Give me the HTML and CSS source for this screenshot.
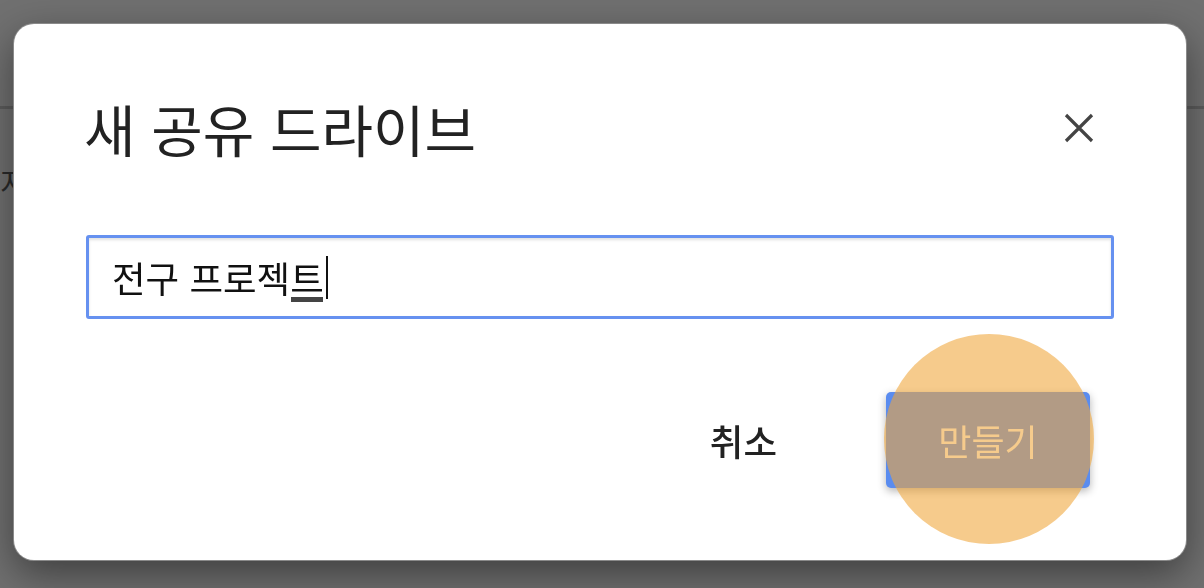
FILE: index.html
```html
<!DOCTYPE html>
<html lang="ko">
<head>
    <meta charset="UTF-8">
    <meta name="viewport" content="width=device-width, initial-scale=1.0">
    <title>새 공유 드라이브</title>
    <link rel="stylesheet" href="styles.css">
</head>

<body>
    <!-- page behind the modal -->
    <div class="page">
        <div class="page-header"></div>
        <div class="page-row"><span class="page-label">지</span></div>
    </div>

    <div class="backdrop">
        <div class="dialog">
            <div class="dialog-header">
                <h1>새 공유 드라이브</h1>
                <button class="close-button" aria-label="닫기">
                    <svg width="30" height="30" viewBox="0 0 30 30">
                        <path d="M2 2 L28 28 M28 2 L2 28" stroke="#444" stroke-width="3.2" fill="none"/>
                    </svg>
                </button>
            </div>

            <div class="name-field">
                <span class="typed">전구 프로젝</span><span class="composing">트</span><span class="caret"></span>
            </div>

            <div class="actions">
                <button class="cancel-button">취소</button>
                <div class="create-wrap">
                    <button class="create-button">만들기</button>
                    <!-- tap highlight -->
                    <span class="tap"></span>
                </div>
            </div>
        </div>
    </div>
</body>
</html>
```

FILE: styles.css
```css
body {
    margin: 0;
    height: 588px;
    overflow: hidden;
    background-color: #707070;
    font-family: "Noto Sans CJK KR", "Noto Sans", sans-serif;
    color: #222;
}

.page {
    height: 100%;
}

.page-header {
    height: 106px;
    border-bottom: 3px solid #5c5c5c;
}

.page-row {
    padding-top: 50px;
}

.page-label {
    display: inline-block;
    margin-left: 0;
    font-size: 30px;
    color: #2a2a2a;
}

/* Modal */
.backdrop {
    position: fixed;
    inset: 0;
}

.dialog {
    position: absolute;
    left: 14px;
    top: 24px;
    width: 1172px;
    height: 536px;
    box-sizing: border-box;
    padding: 72px 72px 72px 72px;
    background-color: #fff;
    border-radius: 20px;
    box-shadow: 0 0 0 1px #8a8a8a, 0 14px 40px rgba(0, 0, 0, 0.45);
    display: flex;
    flex-direction: column;
}

.dialog-header {
    height: 64px;
    display: flex;
    align-items: center;
    justify-content: space-between;
}

h1 {
    margin: 0 0 0 -2px;
    font-size: 56px;
    font-weight: 400;
    line-height: 64px;
    color: #222;
}

.close-button {
    border: none;
    background: none;
    padding: 0;
    margin-right: 20px;
    width: 30px;
    height: 30px;
    cursor: pointer;
}

.name-field {
    margin-top: 75px;
    height: 84px;
    box-sizing: border-box;
    border: 3px solid #6691f0;
    border-radius: 3px;
    box-shadow: inset 0 2px 3px rgba(0, 0, 0, 0.12);
    padding: 0 23px;
    display: flex;
    align-items: center;
    font-size: 36.5px;
    color: #111;
}

.composing {
    position: relative;
}

.composing::after {
    content: "";
    position: absolute;
    left: 1px;
    right: 1px;
    bottom: 2px;
    height: 5px;
    background-color: #444;
}

.caret {
    display: inline-block;
    width: 2px;
    height: 43px;
    margin-left: 2px;
    background-color: #111;
}

.actions {
    margin-top: 73px;
    display: flex;
    justify-content: flex-end;
    align-items: center;
    gap: 69px;
    padding-right: 24px;
}

.cancel-button {
    border: none;
    background: none;
    font-family: inherit;
    font-size: 36.5px;
    font-weight: 500;
    color: #222;
    padding: 0 40px;
    height: 96px;
    cursor: pointer;
}

.create-wrap {
    position: relative;
}

.create-button {
    display: block;
    width: 204px;
    height: 96px;
    border: none;
    border-radius: 5px;
    background-color: #5a8cef;
    color: #fff;
    font-family: inherit;
    font-size: 36px;
    box-shadow: 0 3px 8px rgba(0, 0, 0, 0.3);
    cursor: pointer;
}

.tap {
    position: absolute;
    left: -2px;
    top: -58px;
    width: 210px;
    height: 210px;
    border-radius: 50%;
    background-color: rgba(240, 166, 59, 0.59);
    pointer-events: none;
}
```
